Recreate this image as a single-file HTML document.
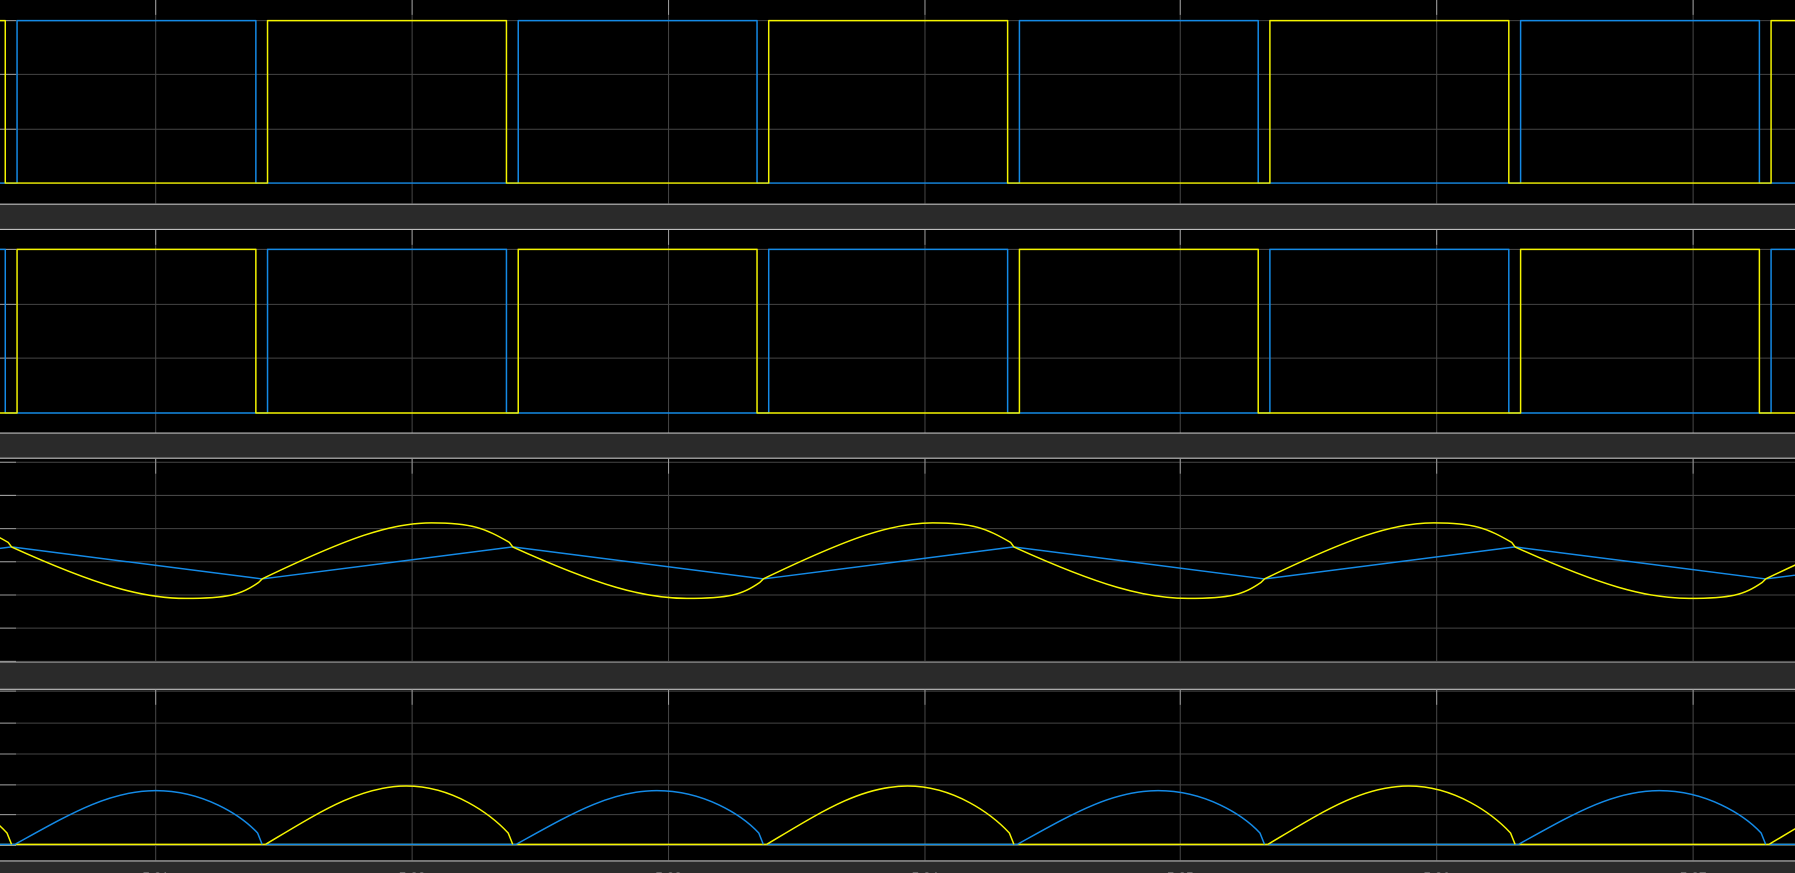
<!DOCTYPE html>
<html><head><meta charset="utf-8"><style>
html,body{margin:0;padding:0;background:#000;overflow:hidden}
svg{display:block}
</style></head><body>
<svg id="s" width="1795" height="873" viewBox="0 0 1568 763" preserveAspectRatio="none" xmlns="http://www.w3.org/2000/svg">
<rect width="1568" height="763" fill="#000"/>
<g id="bg"></g>
<g id="sig" fill="none" stroke-width="1.3" stroke-linejoin="round"></g>
<g font-family="Liberation Sans, sans-serif" font-size="12" fill="#aaa" text-anchor="middle">
<text x="136" y="771">5.21</text><text x="360" y="771">5.22</text><text x="584" y="771">5.23</text><text x="808" y="771">5.24</text><text x="1031" y="771">5.25</text><text x="1255" y="771">5.26</text><text x="1479" y="771">5.27</text>
</g>
</svg>
<script>
var NS="http://www.w3.org/2000/svg",bg=document.getElementById('bg'),sg=document.getElementById('sig');
function el(p,t,a){var e=document.createElementNS(NS,t);for(var k in a)e.setAttribute(k,a[k]);p.appendChild(e);return e;}
var panels=[[0,178,[18,65,113,160]],[201,378,[218,266,313,361]],[401,578,[404,433,462,491,520,549,578]],[603,752,[604,632,659,686,712,739]]];
var vx=[136,360,584,808,1031,1255,1479];
[[178,201],[378,401],[578,603],[752,763]].forEach(function(b){el(bg,'rect',{x:0,y:b[0],width:1568,height:b[1]-b[0],fill:'#2a2a2a'});
 el(bg,'line',{x1:0,x2:1568,y1:b[0]+0.5,y2:b[0]+0.5,stroke:'#bdbdbd','stroke-width':1});
 if(b[1]<763)el(bg,'line',{x1:0,x2:1568,y1:b[1]-0.5,y2:b[1]-0.5,stroke:'#bdbdbd','stroke-width':1});});
panels.forEach(function(p){
 p[2].forEach(function(y){el(bg,'line',{x1:0,x2:1568,y1:y,y2:y,stroke:'#454545','stroke-width':0.9});
  el(bg,'line',{x1:0,x2:14,y1:y,y2:y,stroke:'#999','stroke-width':0.9});});
 vx.forEach(function(x){el(bg,'line',{x1:x,x2:x,y1:p[0],y2:p[1],stroke:'#454545','stroke-width':0.9});
  el(bg,'line',{x1:x,x2:x,y1:p[0],y2:p[0]+13,stroke:'#999','stroke-width':0.9});});
});
var Y='#f5f500',B='#148ae6',P=218.9,T=2*P;
function sq(rise,fall,top,bot,col){
 var ev=[];for(var k=-1;k<6;k++){ev.push([rise+k*T,1]);ev.push([fall+k*T,0]);}
 ev.sort(function(a,b){return a[0]-b[0]});
 var st=0;ev.forEach(function(e){if(e[0]<0)st=e[1];});
 var y=st?top:bot,d='M0,'+y;
 ev.forEach(function(e){if(e[0]>=0&&e[0]<=1568){var ny=e[1]?top:bot;d+=' L'+e[0].toFixed(1)+','+y+' L'+e[0].toFixed(1)+','+ny;y=ny;}});
 d+=' L1568,'+y;el(sg,'path',{d:d,stroke:col});
}
sq(14.9,223.5,18,160,B);sq(233.7,4.6,18,160,Y);
sq(233.7,4.6,218,361,B);sq(14.9,223.5,218,361,Y);
var d='';for(var k=-1;k<5;k++){var a=10+k*T;d+=(k==-1?'M':' L')+a+',478 L'+(a+P)+',506';}
el(sg,'path',{d:d,stroke:B});
d='';for(var k=-1;k<5;k++){var a=10+k*T,b=a+P;
 d+='M'+a+',478 C'+(a+75)+',512 '+(a+115)+',523 '+(a+152)+',523 S'+(a+200)+',520 '+(a+216)+',509 L'+(a+219)+',506 ';
 d+='M'+b+',506 C'+(b+75)+',470 '+(b+112)+',457 '+(b+148)+',457 S'+(b+195)+',462 '+(b+216)+',474 L'+(b+219)+',478 ';}
el(sg,'path',{d:d,stroke:Y});
el(sg,'path',{d:'M0,738 L1568,738',stroke:Y});
d='';var dy='';for(var k=-1;k<5;k++){var s=13+k*T,s2=s+P;
 d+='M'+s+',738 C'+(s+47)+',712 '+(s+82)+',691 '+(s+123)+',691 S'+(s+197)+',712 '+(s+212)+',728 L'+(s+216)+',738 ';
 d+='M'+s2+',738 L'+(s2+P)+',738 ';
 dy+='M'+s2+',738 C'+(s2+47)+',710 '+(s2+82)+',687 '+(s2+123)+',687 S'+(s2+197)+',712 '+(s2+212)+',728 L'+(s2+216)+',738 ';}
el(sg,'path',{d:d,stroke:B});el(sg,'path',{d:dy,stroke:Y});
</script>
</body></html>
